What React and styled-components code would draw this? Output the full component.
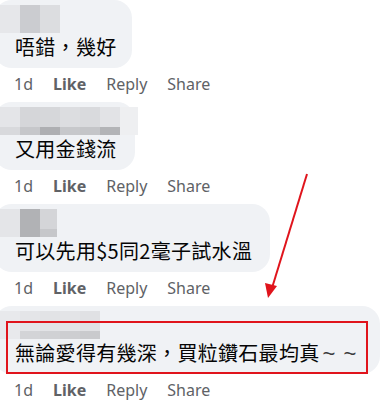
import styled, { createGlobalStyle } from 'styled-components';

const GlobalStyle = createGlobalStyle`
    body {
        margin: 0;
        background: #ffffff;
        overflow: hidden;
    }
`;

const Page = styled.div`
    position: relative;
    width: 385px;
    height: 400px;
    overflow: hidden;
    display: flex;
    flex-direction: column;
`;

const Comment = styled.div`
    display: flex;
    flex-direction: column;
    align-items: flex-start;
    margin-top: ${({ $top }) => $top}px;
`;

const Bubble = styled.div`
    position: relative;
    display: flex;
    flex-direction: column;
    align-items: flex-start;
    box-sizing: border-box;
    width: ${({ $width }) => $width}px;
    height: 68px;
    margin-left: -6px;
    padding: 5px 0 0 21px;
    background: #f0f2f5;
    border-radius: 18px;
`;

const Blur = styled.div`
    display: flex;
    height: 28px;
    margin-left: -15px;
`;

const Cell = styled.div`
    width: ${({ $w }) => $w || 20}px;
    height: 100%;
    background: linear-gradient(
        to bottom,
        ${({ $top }) => $top} 0,
        ${({ $top }) => $top} 70%,
        ${({ $bottom, $top }) => $bottom || $top} 70%
    );
`;

const Text = styled.div`
    font-family: "Noto Sans CJK TC", "Noto Sans", sans-serif;
    font-size: 20px;
    line-height: 28px;
    color: #050505;
    white-space: nowrap;
    letter-spacing: 0.3px;
`;

const Tilde = styled.span`
    font-family: "Liberation Sans", sans-serif;
    font-size: 22px;
    letter-spacing: 1px;
    margin-left: 3px;
    color: #3a3b3c;
`;

const Actions = styled.div`
    display: flex;
    gap: 20px;
    height: 32px;
    align-items: center;
    padding-left: 14px;
    font-family: "Noto Sans", "Open Sans", sans-serif;
    font-size: 16px;
    color: #606266;
`;

const Action = styled.span`
    font-weight: ${({ $bold }) => ($bold ? 700 : 400)};
`;

const Highlight = styled.div`
    position: absolute;
    left: 12px;
    top: 15px;
    width: 362px;
    height: 53px;
    box-sizing: border-box;
    border: 2px solid #e0141c;
`;

const Arrow = styled.svg`
    position: absolute;
    left: 0;
    top: 0;
    pointer-events: none;
`;

const comments = [
    {
        top: 0,
        width: 138,
        text: '唔錯，幾好',
        blur: [
            { top: '#e6e7ea' },
            { top: '#cbccd0' },
            { top: '#dcdde0' },
        ],
    },
    {
        top: 2,
        width: 141,
        text: '又用金錢流',
        blur: [
            { top: '#e4e5e8', bottom: '#d8d9dc' },
            { top: '#d5d6d9', bottom: '#c6c7ca' },
            { top: '#d6d7da', bottom: '#aeafb2' },
            { top: '#dcdde0', bottom: '#c7c8cb' },
            { top: '#d9dadd', bottom: '#c4c5c8' },
            { top: '#e2e3e6', bottom: '#b3b4b7' },
            { top: '#eeeff1', bottom: '#eeeff1', w: 18 },
        ],
    },
    {
        top: 2,
        width: 276,
        text: '可以先用$5同2毫子試水溫',
        blur: [
            { top: '#e4e5e8' },
            { top: '#b1b2b5' },
            { top: '#d4d5d8', bottom: '#c6c7ca', w: 17 },
        ],
    },
    {
        top: 2,
        width: 386,
        text: '無論愛得有幾深，買粒鑽石最均真',
        tail: '~ ~',
        highlight: true,
        blur: [
            { top: '#e8e9ec', bottom: '#e8e9ec' },
            { top: '#e4e5e8', bottom: '#d3d4d7' },
            { top: '#e2e3e6', bottom: '#d0d1d4' },
            { top: '#e3e4e7', bottom: '#cdced1' },
            { top: '#e0e1e4', bottom: '#c9cacd' },
        ],
    },
];

function App() {
    return (
        <Page>
            <GlobalStyle />
            {comments.map((c, i) => (
                <Comment key={i} $top={c.top}>
                    <Bubble $width={c.width}>
                        <Blur>
                            {c.blur.map((b, j) => (
                                <Cell key={j} $top={b.top} $bottom={b.bottom} $w={b.w} />
                            ))}
                        </Blur>
                        <Text>
                            {c.text}
                            {c.tail && <Tilde>{c.tail}</Tilde>}
                        </Text>
                        {c.highlight && <Highlight />}
                    </Bubble>
                    <Actions>
                        <Action>1d</Action>
                        <Action $bold>Like</Action>
                        <Action>Reply</Action>
                        <Action>Share</Action>
                    </Actions>
                </Comment>
            ))}
            <Arrow width="385" height="400" viewBox="0 0 385 400">
                <line x1="307" y1="174" x2="272" y2="288" stroke="#e0141c" strokeWidth="2" />
                <polygon points="268,298 265,283 277,286" fill="#e0141c" />
            </Arrow>
        </Page>
    );
}

export default App;
